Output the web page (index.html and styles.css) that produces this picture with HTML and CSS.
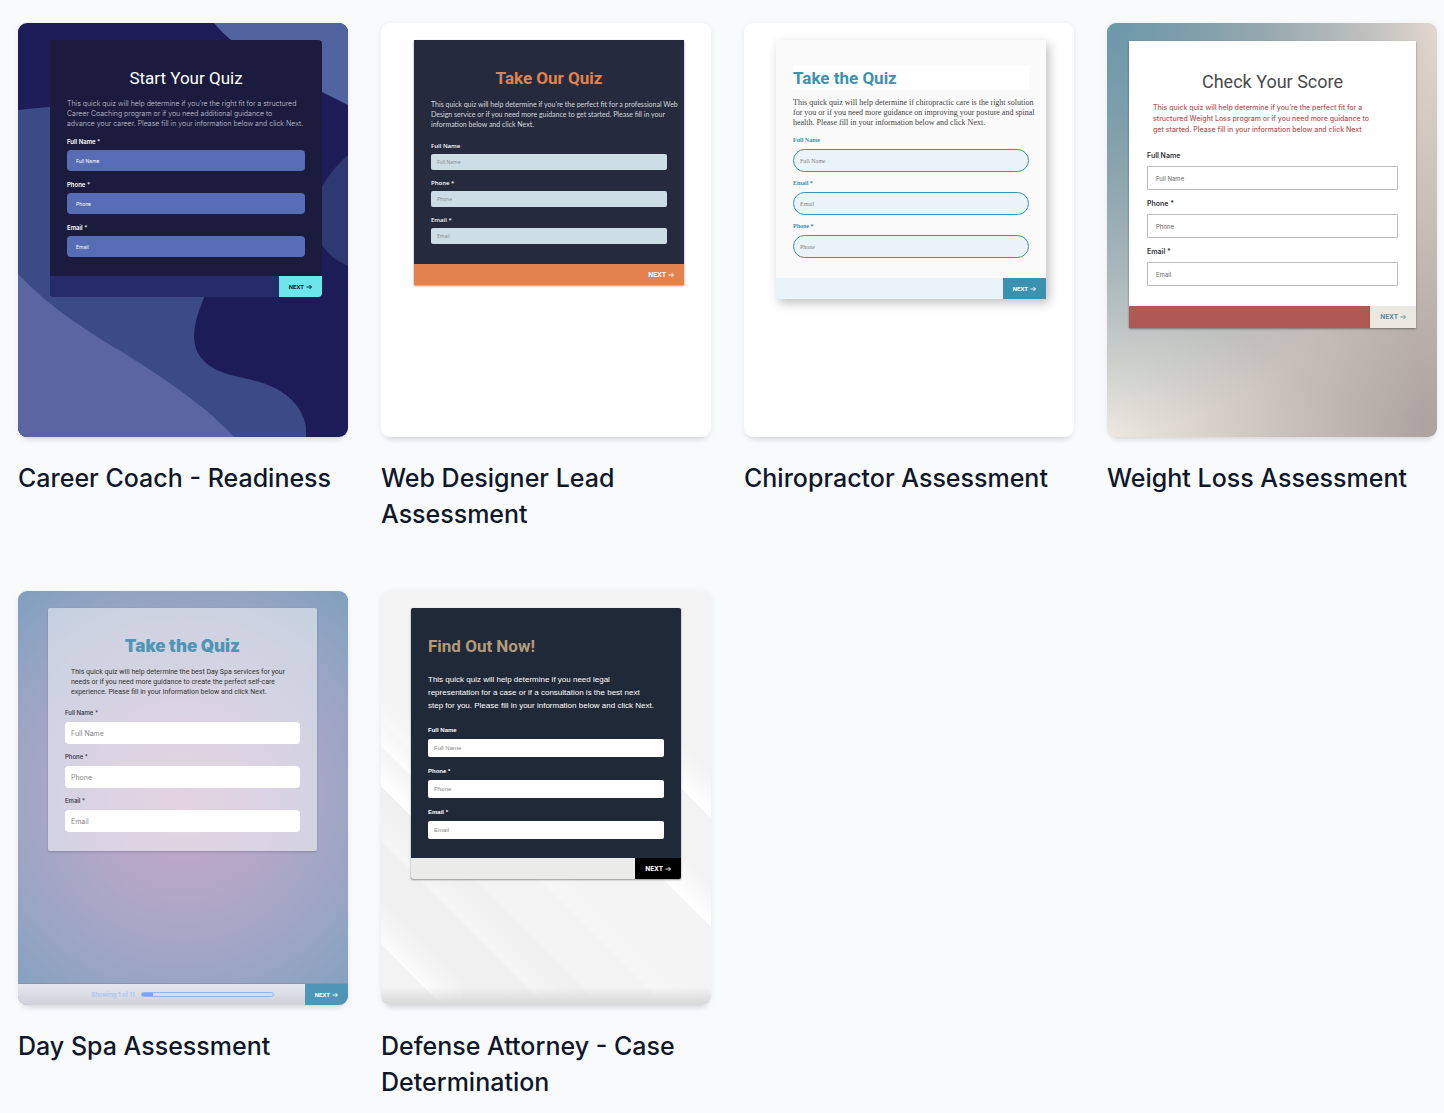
FILE: index.html
```html
<!DOCTYPE html>
<html lang="en">
<head>
<meta charset="utf-8">
<meta name="viewport" content="width=device-width, initial-scale=1">
<title>Quiz templates</title>
<link rel="stylesheet" href="styles.css">
</head>
<body>
<svg width="0" height="0" class="sprite" aria-hidden="true">
  <symbol id="arrow" viewBox="0 0 12 10"><path d="M1 5h10M7 1l4 4-4 4" fill="none" stroke="currentColor" stroke-width="1.8"/></symbol>
</svg>
<main class="gallery">

  <article class="template">
    <div class="thumb coach">
      <svg class="backdrop" viewBox="0 0 330 414" preserveAspectRatio="none" aria-hidden="true">
        <rect width="330" height="414" fill="#1c1d58"/>
        <path d="M196 0C218 27 260 50 304 69L330 82V0Z" fill="#5164a0"/>
        <path d="M330 132C318 143 309 153 302 168C292 200 296 228 330 243Z" fill="#2e3873"/>
        <path d="M0 87Q18 85 32 84C120 78 200 190 187 272C181 287 176 300 176 314C177 348 214 352 234 357C264 364 284 380 288 404V414H0Z" fill="#3c4a86"/>
        <path d="M0 251C30 283 70 309 109 332C150 358 190 385 216 414H0Z" fill="#5b66a1"/>
      </svg>
      <form class="quiz">
        <div class="body">
          <h3>Start Your Quiz</h3>
          <p>This quick quiz will help determine if you’re the right fit for a structured<br>Career Coaching program or if you need additional guidance to<br>advance your career. Please fill in your information below and click Next.</p>
          <div class="fields">
            <label for="c-name">Full Name *</label><input id="c-name" type="text" placeholder="Full Name">
            <label for="c-phone">Phone *</label><input id="c-phone" type="tel" placeholder="Phone">
            <label for="c-email">Email *</label><input id="c-email" type="email" placeholder="Email">
          </div>
        </div>
        <div class="bar"><button type="button">NEXT <svg class="arrow"><use href="#arrow"/></svg></button></div>
      </form>
    </div>
    <h2>Career Coach - Readiness</h2>
  </article>

  <article class="template">
    <div class="thumb designer">
      <form class="quiz">
        <div class="body">
          <h3>Take Our Quiz</h3>
          <p>This quick quiz will help determine if you’re the perfect fit for a professional Web<br>Design service or if you need more guidance to get started. Please fill in your<br>information below and click Next.</p>
          <div class="fields">
            <label for="d-name">Full Name</label><input id="d-name" type="text" placeholder="Full Name">
            <label for="d-phone">Phone *</label><input id="d-phone" type="tel" placeholder="Phone">
            <label for="d-email">Email *</label><input id="d-email" type="email" placeholder="Email">
          </div>
        </div>
        <div class="bar"><button type="button">NEXT <svg class="arrow"><use href="#arrow"/></svg></button></div>
      </form>
    </div>
    <h2>Web Designer Lead Assessment</h2>
  </article>

  <article class="template">
    <div class="thumb chiro">
      <form class="quiz">
        <div class="body">
          <h3>Take the Quiz</h3>
          <p>This quick quiz will help determine if chiropractic care is the right solution<br>for you or if you need more guidance on improving your posture and spinal<br>health. Please fill in your information below and click Next.</p>
          <div class="fields">
            <label for="h-name">Full Name</label><input id="h-name" type="text" placeholder="Full Name">
            <label for="h-email">Email *</label><input id="h-email" type="email" placeholder="Email">
            <label for="h-phone">Phone *</label><input id="h-phone" type="tel" placeholder="Phone">
          </div>
        </div>
        <div class="bar"><button type="button">NEXT <svg class="arrow"><use href="#arrow"/></svg></button></div>
      </form>
    </div>
    <h2>Chiropractor Assessment</h2>
  </article>

  <article class="template">
    <div class="thumb weight">
      <form class="quiz">
        <div class="body">
          <h3>Check Your Score</h3>
          <p>This quick quiz will help determine if you’re the perfect fit for a<br>structured Weight Loss program or if you need more guidance to<br>get started. Please fill in your information below and click Next</p>
          <div class="fields">
            <label for="w-name">Full Name</label><input id="w-name" type="text" placeholder="Full Name">
            <label for="w-phone">Phone *</label><input id="w-phone" type="tel" placeholder="Phone">
            <label for="w-email">Email *</label><input id="w-email" type="email" placeholder="Email">
          </div>
        </div>
        <div class="bar"><button type="button">NEXT <svg class="arrow"><use href="#arrow"/></svg></button></div>
      </form>
    </div>
    <h2>Weight Loss Assessment</h2>
  </article>

  <article class="template">
    <div class="thumb spa">
      <form class="quiz">
        <div class="body">
          <h3>Take the Quiz</h3>
          <p>This quick quiz will help determine the best Day Spa services for your<br>needs or if you need more guidance to create the perfect self-care<br>experience. Please fill in your information below and click Next.</p>
          <div class="fields">
            <label for="s-name">Full Name *</label><input id="s-name" type="text" placeholder="Full Name">
            <label for="s-phone">Phone *</label><input id="s-phone" type="tel" placeholder="Phone">
            <label for="s-email">Email *</label><input id="s-email" type="email" placeholder="Email">
          </div>
        </div>
      </form>
      <div class="bar">
        <div class="status"><span>Showing 1 of 11</span><div class="track"><div class="done" style="width:9%"></div></div></div>
        <button type="button">NEXT <svg class="arrow"><use href="#arrow"/></svg></button>
      </div>
    </div>
    <h2>Day Spa Assessment</h2>
  </article>

  <article class="template">
    <div class="thumb attorney">
      <svg class="backdrop" viewBox="0 0 330 414" preserveAspectRatio="none" aria-hidden="true">
        <defs>
          <linearGradient id="sheen" gradientUnits="userSpaceOnUse" x1="0" y1="0" x2="22" y2="-22">
            <stop offset="0" stop-color="#fff"/>
            <stop offset="1" stop-color="#fff" stop-opacity="0"/>
          </linearGradient>
          <linearGradient id="floor" x1="0" y1="0" x2="0" y2="1">
            <stop offset="0" stop-color="#d8d8d8" stop-opacity="0"/>
            <stop offset="1" stop-color="#d8d8d8"/>
          </linearGradient>
        </defs>
        <rect width="330" height="414" fill="#f3f3f3"/>
        <path d="M0 195L219 414H66L0 353Z" fill="#f0f0f0"/>
        <path d="M0 0L60 60V15L0 -45Z" fill="url(#sheen)" transform="translate(0 155)" opacity=".8"/>
        <path d="M0 0L60 60V15L0 -45Z" fill="url(#sheen)" transform="translate(0 195)"/>
        <path d="M0 0L80 80V35L0 -45Z" fill="url(#sheen)" transform="translate(0 353)" opacity=".8"/>
        <path d="M0 0L330 330V285L0 -45Z" fill="url(#sheen)" transform="translate(0 250)" opacity=".3"/>
        <path d="M0 0L330 330V285L0 -45Z" fill="url(#sheen)" transform="translate(0 130)" opacity=".3"/>
        <path d="M240 240L330 330V285L240 195Z" fill="url(#sheen)" transform="translate(0 6)"/>
        <path d="M270 270L330 330V285L270 225Z" fill="url(#sheen)" transform="translate(0 -103)"/>
        <rect y="396" width="330" height="18" fill="url(#floor)"/>
      </svg>
      <form class="quiz">
        <div class="body">
          <h3>Find Out Now!</h3>
          <p>This quick quiz will help determine if you need legal<br>representation for a case or if a consultation is the best next<br>step for you. Please fill in your information below and click Next.</p>
          <div class="fields">
            <label for="a-name">Full Name</label><input id="a-name" type="text" placeholder="Full Name">
            <label for="a-phone">Phone *</label><input id="a-phone" type="tel" placeholder="Phone">
            <label for="a-email">Email *</label><input id="a-email" type="email" placeholder="Email">
          </div>
        </div>
        <div class="bar"><button type="button">NEXT <svg class="arrow"><use href="#arrow"/></svg></button></div>
      </form>
    </div>
    <h2>Defense Attorney - Case Determination</h2>
  </article>

</main>
</body>
</html>
```

FILE: styles.css
```css
* { box-sizing: border-box; }

body {
  margin: 0;
  background: #f9fafc;
  color: #0f172a;
  font-family: Inter, sans-serif;
}

.sprite { position: absolute; }

.gallery {
  display: grid;
  grid-template-columns: repeat(4, minmax(0, 1fr));
  gap: 59px 33px;
  padding: 23px 7px 14px 18px;
}

.template h2 {
  margin: 23px 0 0;
  font-size: 25px;
  line-height: 36px;
  font-weight: 500;
}

/* Preview tile */
.thumb {
  position: relative;
  display: flex;
  flex-direction: column;
  aspect-ratio: 330 / 414;
  padding: 17px 30px 0;
  overflow: hidden;
  border-radius: 9px;
  background: #fff;
  box-shadow: 0 8px 6px -6px rgba(15, 23, 42, .12), 0 1px 6px -1px rgba(15, 23, 42, .1);
}

.backdrop {
  position: absolute;
  inset: 0;
  width: 100%;
  height: 100%;
}

.quiz {
  position: relative;
  border-radius: 2px;
  overflow: hidden;
}

.body { padding: 26px 17px 19px; }

.quiz h3 {
  margin: 0;
  font-family: Roboto, sans-serif;
  font-size: 17px;
  line-height: 24px;
  font-weight: 500;
  text-align: center;
}

.quiz p {
  margin: 9px 0 0;
  font-size: 7px;
  line-height: 10px;
  white-space: nowrap;
}

.fields {
  display: flex;
  flex-direction: column;
  margin-top: 8px;
}

.fields label {
  font-size: 6px;
  line-height: 10px;
  font-weight: 600;
}

.fields input {
  width: 100%;
  height: 22px;
  margin: 4px 0 8px;
  padding: 0 6px;
  border: 0;
  border-radius: 4px;
  background: #fff;
  font-family: inherit;
  font-size: 6px;
}

.fields input:last-child { margin-bottom: 0; }
.fields input::placeholder { color: #858585; opacity: 1; }

.bar {
  display: flex;
  justify-content: flex-end;
  height: 21px;
}

.bar button {
  display: flex;
  align-items: center;
  gap: 2px;
  padding: 0 10px;
  border: 0;
  background: none;
  color: #fff;
  font-family: Roboto, sans-serif;
  font-size: 6px;
  font-weight: 700;
}

.arrow { width: 6px; height: 6px; }

/* Career coach */
.coach { padding: 17px 26px 0 32px; }
.coach .quiz { background: #1b1c3d; border-radius: 4px; color: #fff; }
.coach h3 { font-weight: 400; }
.coach p { color: #c3c4d6; font-weight: 300; }
.coach .fields input { height: 21px; margin: 3px 0 9px; padding: 0 9px; background: #566db5; font-size: 5px; }
.coach .fields input:last-child { margin-bottom: 0; }
.coach .fields input::placeholder { color: #fff; }
.coach .bar { background: #262c6a; }
.coach .bar button { background: #6ce6ea; color: #10132e; }

/* Web designer */
.designer { padding: 17px 27px 0 33px; }
.designer .quiz {
  border-radius: 0;
  background: #252b3d;
  color: #fff;
  font-family: "Open Sans", sans-serif;
  box-shadow: 0 1px 2px rgba(0, 0, 0, .4);
}
.designer h3 { color: #e3824e; font-weight: 700; }
.designer p { color: #d5d8df; font-family: Lato, sans-serif; }
.designer .body { padding-bottom: 20px; }
.designer .fields { margin-top: 12px; }
.designer .fields input { height: 16px; margin: 3px 0 8px; border-radius: 2px; background: #ccdde5; font-size: 5px; }
.designer .fields input:last-child { margin-bottom: 0; }
.designer .bar { background: #e3824e; }
.designer .bar button { font-size: 7px; }

/* Chiropractor */
.chiro { padding: 17px 28px 0 32px; }
.chiro .quiz {
  border-radius: 0;
  background: #fafafa;
  color: #3d91b0;
  font-family: "Liberation Serif", serif;
  box-shadow: 3px 4px 10px rgba(0, 0, 0, .25);
}
.chiro h3 { background: #fff; font-weight: 700; text-align: left; }
.chiro p { margin-top: 8px; color: #444; font-size: 8px; }
.chiro .body { padding-bottom: 20px; }
.chiro .fields { margin-top: 7px; }
.chiro .fields input { height: 23px; margin-bottom: 6px; border: 1px solid #3d91b0; border-radius: 12px; background: #eaf3f8; }
.chiro .fields input:last-child { margin-bottom: 0; }
.chiro .bar { background: #eaf3f8; }
.chiro .bar button { background: #3d91b0; }

/* Weight loss */
.weight {
  padding: 18px 21px 0 22px;
  background:
    radial-gradient(ellipse at 0 0, #6b99ab, rgba(140, 170, 180, 0) 70%),
    radial-gradient(ellipse at 0 100%, #ece8df, rgba(225, 215, 206, 0) 68%),
    radial-gradient(ellipse at 100% 0, #e1d7ce, rgba(225, 215, 206, 0) 68%),
    #aea3a0;
}
.weight .quiz { border-radius: 0; background: #fff; color: #333; box-shadow: 0 1px 2px rgba(0, 0, 0, .4); }
.weight .body { padding: 29px 18px 20px; }
.weight h3 { color: #4b4b4b; font-size: 18px; font-weight: 400; }
.weight p { margin-top: 8px; padding-left: 6px; color: #ae5a53; font-weight: 500; line-height: 11px; }
.weight .fields { margin-top: 16px; }
.weight .fields label { font-size: 7px; }
.weight .fields input { height: 24px; margin: 5px 0 9px; padding: 0 8px; border: 1px solid #bbb; border-radius: 1px; }
.weight .fields input:last-child { margin-bottom: 0; }
.weight .fields input::placeholder { color: #666; }
.weight .bar { background: #ae5a53; height: 22px; }
.weight .bar button { background: #ebe8e1; color: #5b8fa3; font-size: 7px; }

/* Day spa */
.spa { padding-right: 31px; background: radial-gradient(circle, #c9a6c4, #b1a7c7 38%, #9aa5c3 70%, #7fa0be); }
.spa .quiz { background: rgba(255, 255, 255, .5); box-shadow: 0 1px 2px rgba(60, 60, 90, .3); color: #2c2c40; }
.spa h3 { color: #4f96b6; font-family: Inter, sans-serif; font-weight: 900; }
.spa p { padding-left: 6px; color: #333; font-family: Roboto, sans-serif; }
.spa .fields { margin-top: 11px; }
.spa .fields label { font-weight: 500; }
.spa .fields input { font-size: 7px; }
.spa > .bar {
  margin: auto -31px 0 -30px;
  height: 22px;
  background: linear-gradient(#e3e8f0, #cfd2d7);
  border-top: 1px solid #8a92ad;
}
.spa > .bar button { background: #4f96b6; }
.status {
  flex: 1;
  display: flex;
  align-items: center;
  justify-content: center;
  gap: 6px;
  padding-left: 42px;
  font-size: 6px;
  font-weight: 600;
  color: #a9c3f2;
}
.track { width: 133px; height: 5px; border: 1px solid #93b4ec; border-radius: 3px; }
.done { height: 100%; background: #7aa7ee; }

/* Defense attorney */
.attorney .quiz {
  background: #202938;
  color: #fff;
  font-family: "Liberation Sans", sans-serif;
  box-shadow: 0 1px 2px rgba(0, 0, 0, .4);
}
.attorney h3 { color: #b39b7a; font-weight: 700; text-align: left; }
.attorney p { margin-top: 15px; font-size: 8px; line-height: 13px; }
.attorney .fields { margin-top: 13px; }
.attorney .fields label { font-weight: 700; }
.attorney .fields input { height: 18px; margin-bottom: 9px; border-radius: 2px; }
.attorney .fields input:last-child { margin-bottom: 0; }
.attorney .bar { background: #ebebea; }
.attorney .bar button { background: #000; font-size: 7px; }
```
